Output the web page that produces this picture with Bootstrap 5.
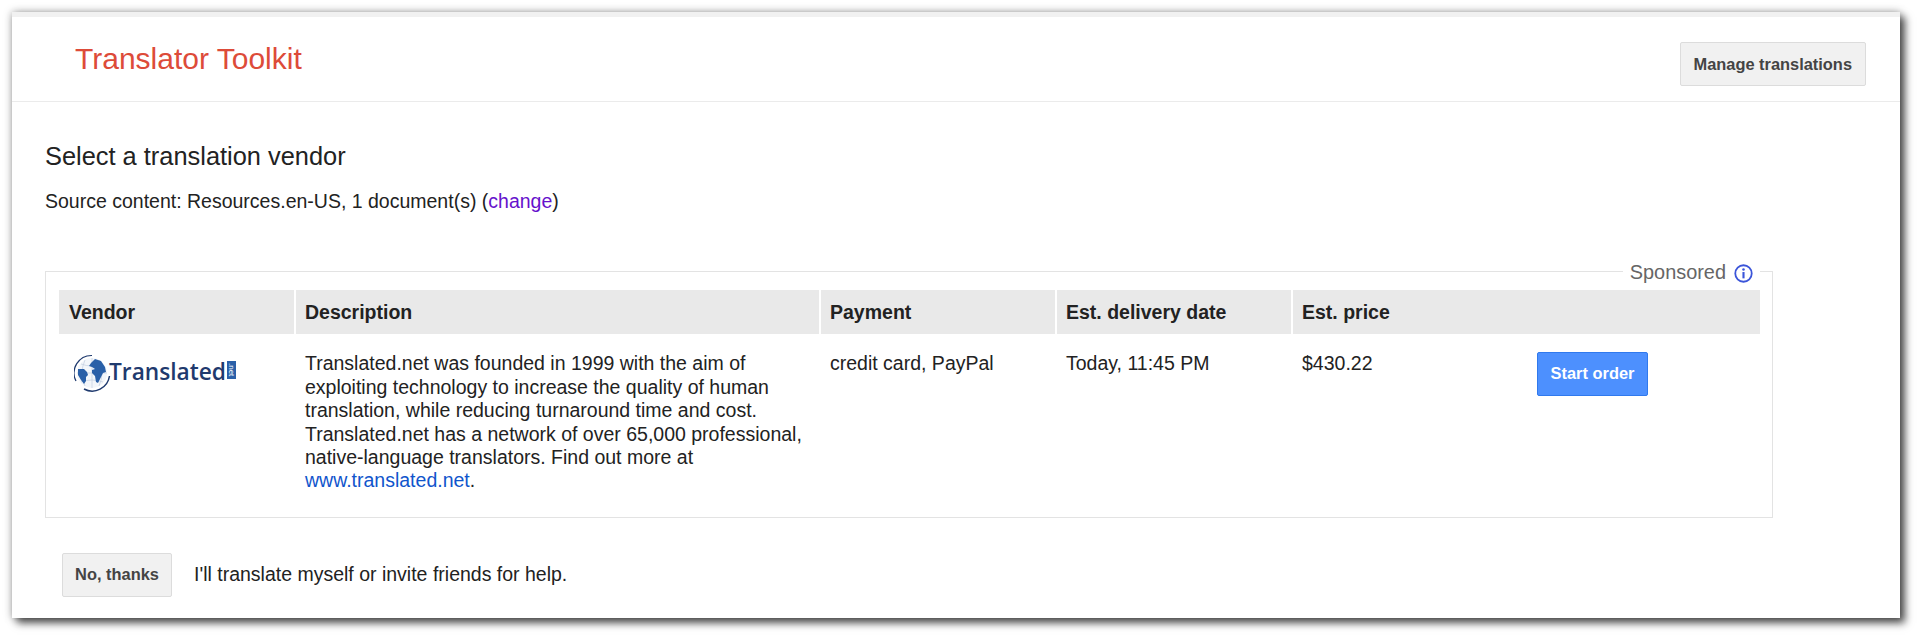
<!DOCTYPE html>
<html lang="en">
<head>
  <meta charset="UTF-8" />
  <title>Translator Toolkit</title>
  <link href="https://cdn.jsdelivr.net/npm/bootstrap@5.3.2/dist/css/bootstrap.min.css" rel="stylesheet">
  <style>
    html, body { height: 638px; }
    body {
      background: #fff;
      font-family: "Liberation Sans", Arial, sans-serif;
      color: #222;
      font-size: 19.5px;
      line-height: 23.4px;
      padding: 12px 20px 20px 12px;
    }
    .tk-window {
      height: 606px;
      background: #fff;
      border-top: 5px solid #f1f1f1;
      box-shadow: 5px 5px 8px rgba(0,0,0,.65), 0 0 8px rgba(0,0,0,.35);
    }
    .tk-header {
      height: 85px;
      border-bottom: 1px solid #ebebeb;
      padding: 24px 34px 0 63px;
    }
    .tk-title {
      color: #dd4b39;
      font-size: 30px;
      line-height: 36px;
      margin: 0;
      font-weight: 400;
    }
    .tk-btn {
      background: #f1f1f1;
      border: 1px solid #dcdcdc;
      border-radius: 2px;
      color: #444;
      font-size: 16.4px;
      font-weight: 700;
      line-height: 20px;
      padding: 11px 13px;
      margin-top: 1px;
    }
    .tk-btn:hover { background: #f1f1f1; color: #333; border-color: #c6c6c6; }
    .tk-btn-blue {
      background: #4d90fe;
      border: 1px solid #3079ed;
      color: #fff;
      width: 111px;
      padding: 10px 0 12px;
      margin-top: 0;
    }
    .tk-btn-blue:hover { background: #357ae8; color: #fff; }
    .tk-body { padding: 39px 0 0 33px; }
    .tk-heading {
      font-size: 25.4px;
      line-height: 30px;
      font-weight: 400;
      margin: 0 0 19px;
    }
    .tk-source { margin: 0; }
    .tk-source a { color: #6611cc; text-decoration: none; }
    .tk-box {
      width: 1728px;
      height: 247px;
      margin-top: 58px;
      border: 1px solid #e3e3e3;
      padding: 18px 12px 0 13px;
      position: relative;
    }
    .tk-sponsored {
      position: absolute;
      top: -11px;
      right: 0;
      margin-right: 12px;
      background: #fff;
      padding: 0 7px;
      color: #666;
      display: flex;
      align-items: center;
      gap: 8px;
      font-size: 19.9px;
    }
    .tk-table { width: 1701px; table-layout: fixed; margin: 0; }
    .tk-table th {
      background: #e9e9e9;
      color: #222;
      font-weight: 700;
      height: 44px;
      padding: 0 10px 0 9px;
      border: 0;
      border-left: 2px solid #fff;
      vertical-align: middle;
    }
    .tk-table th:first-child { border-left: 0; padding-left: 10px; }
    .tk-table td {
      border: 0;
      padding: 18px 10px 0 10px;
      vertical-align: top;
      color: #222;
    }
    .tk-table td a { color: #1155cc; text-decoration: none; }
    .tk-logo { display: block; margin: 2px 0 0 5px; }
    .tk-footer { padding: 35px 0 0 17px; gap: 22px; }
    .tk-footer .tk-btn { width: 110px; padding: 10px 0 12px; margin: 0; }
    .tk-footer span { position: relative; top: -1px; }
  </style>
</head>
<body>

  <div class="tk-window">
    <!-- Header -->
    <div class="tk-header d-flex justify-content-between align-items-start">
      <h1 class="tk-title">Translator Toolkit</h1>
      <button class="btn tk-btn" type="button">Manage translations</button>
    </div>

    <div class="tk-body">
      <h2 class="tk-heading">Select a translation vendor</h2>
      <p class="tk-source">Source content: Resources.en-US, 1 document(s) (<a href="#">change</a>)</p>

      <!-- Vendor box -->
      <div class="tk-box">
        <div class="tk-sponsored">
          <span>Sponsored</span>
          <svg width="19" height="19" viewBox="0 0 18 18">
            <circle cx="9" cy="9" r="7.8" fill="none" stroke="#3b55d9" stroke-width="1.7"/>
            <circle cx="9" cy="5.3" r="1.2" fill="#3b55d9"/>
            <rect x="8" y="7.6" width="2" height="6" fill="#3b55d9"/>
          </svg>
        </div>
        <table class="table tk-table">
          <colgroup>
            <col style="width:236px"><col style="width:525px"><col style="width:236px"><col style="width:236px"><col style="width:235px"><col>
          </colgroup>
          <thead>
            <tr><th>Vendor</th><th>Description</th><th>Payment</th><th>Est. delivery date</th><th colspan="2">Est. price</th></tr>
          </thead>
          <tbody>
            <tr>
              <td>
                <svg class="tk-logo" width="164" height="38" viewBox="0 0 164 38">
                  <circle cx="18" cy="19" r="15" fill="#f3f6fa"/>
                  <path d="M3 19h30M18 4v30M7 10q11 4 22 0M7 28q11-4 22 0M11 6q-6 13 0 26M25 6q6 13 0 26" fill="none" stroke="#c3cfe0" stroke-width=".7"/>
                  <path d="M17 9l4-4 6 2 4 6 1 5-3 1-2 4-3 6-2-1-1-6-3-3 0-3 3-1-3-2-3-1z" fill="#2a60a8"/>
                  <path d="M4 15l6 0 3 3 1 3-2 2 0 4-2 3-3-4-3-5z" fill="#2a60a8"/>
                  <path d="M2 27A17.500 17.500 0 0 1 18 1.500" fill="none" stroke="#1f3a6e" stroke-width="1.2"/>
                  <path d="M35.500 22A17.500 17.500 0 0 1 10 35" fill="none" stroke="#1f3a6e" stroke-width="1.5"/>
                  <text x="35" y="26" font-family="'Open Sans', sans-serif" font-weight="600" font-size="24" fill="#1f3a6e" textLength="117" lengthAdjust="spacingAndGlyphs">Translated</text>
                  <rect x="153" y="7" width="9" height="18" fill="#2a60a8"/>
                  <text transform="translate(155 9) rotate(90)" font-family="'Liberation Sans', sans-serif" font-size="8" fill="#fff">.net</text>
                </svg>
              </td>
              <td>Translated.net was founded in 1999 with the aim of exploiting technology to increase the quality of human translation, while reducing turnaround time and cost. Translated.net has a network of over 65,000 professional, native-language translators. Find out more at <a href="#">www.translated.net</a>.</td>
              <td>credit card, PayPal</td>
              <td>Today, 11:45 PM</td>
              <td>$430.22</td>
              <td><button class="btn tk-btn tk-btn-blue" type="button">Start order</button></td>
            </tr>
          </tbody>
        </table>
      </div>

      <!-- Decline -->
      <div class="tk-footer d-flex align-items-center">
        <button class="btn tk-btn" type="button">No, thanks</button>
        <span>I'll translate myself or invite friends for help.</span>
      </div>
    </div>
  </div>

  <script src="https://cdn.jsdelivr.net/npm/bootstrap@5.3.2/dist/js/bootstrap.bundle.min.js"></script>
</body>
</html>
